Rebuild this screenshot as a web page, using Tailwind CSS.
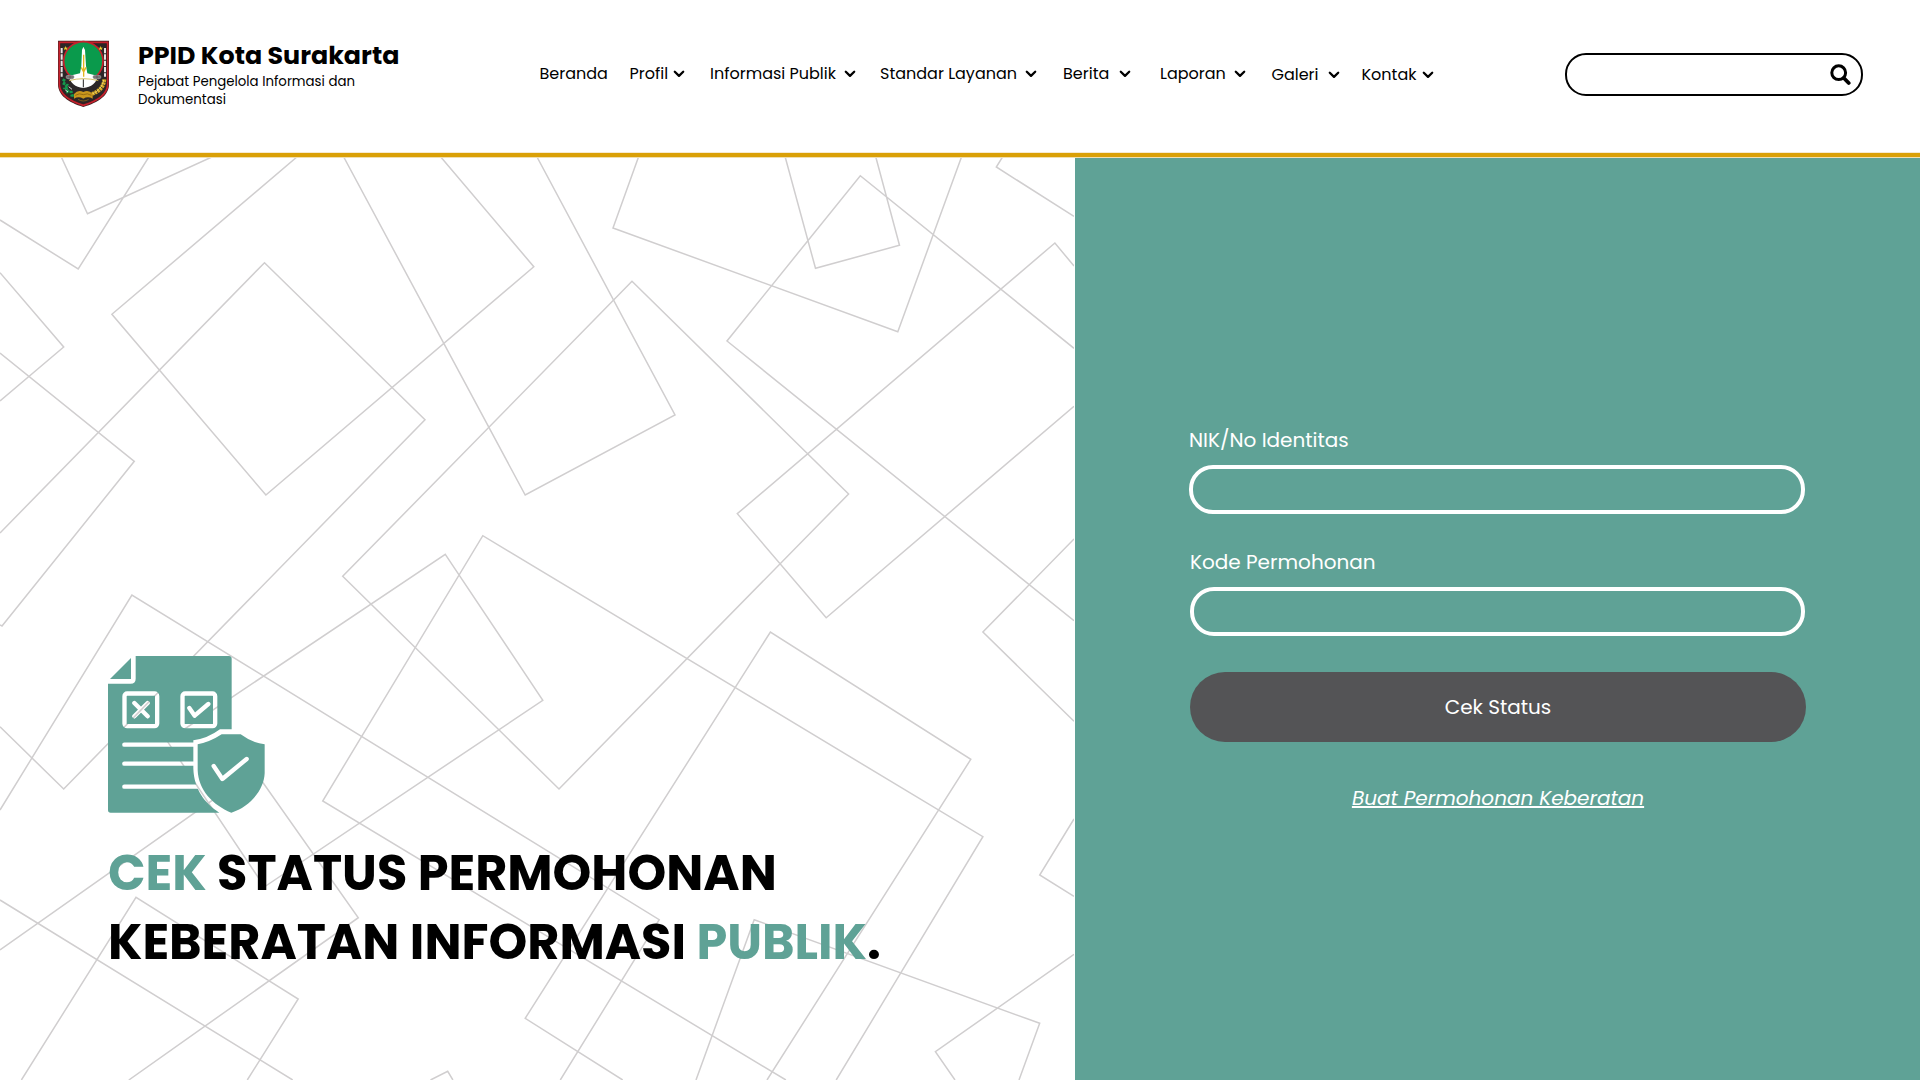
<!DOCTYPE html>
<html lang="id">
<head>
<meta charset="utf-8">
<title>PPID Kota Surakarta</title>
<script src="https://cdn.jsdelivr.net/npm/@tailwindcss/browser@4"></script>
</head>
<body class="w-[1920px] h-[1080px] overflow-hidden bg-white text-black font-[Poppins,Inter,sans-serif]">
<svg class="hidden">
  <symbol id="chev" viewBox="0 0 12 8"><path d="M1.8 1.8 6 5.9l4.2-4.1" fill="none" stroke="#000" stroke-width="2.3" stroke-linecap="round" stroke-linejoin="round"/></symbol>
</svg>
<header class="relative z-10 flex items-start h-[157px] border-b-4 border-[#daa007] shadow-[0_1px_0_#f0dfb0,inset_0_-1px_0_#f6ead0] whitespace-nowrap">
  <svg class="w-[66px] h-[80px] ml-[50px] mt-[34px] shrink-0" viewBox="0 0 198 240">
    <path d="M24 20H177V150C177 185 145 205 100 219C55 205 24 185 24 150Z" fill="#3b2020"/>
    <path d="M28 25H173V150C173 181 143 201 100 214C58 201 28 181 28 150Z" fill="none" stroke="#c8202c" stroke-width="5"/>
    <path d="M32 29H169V149C169 177 141 196 100 208C60 196 32 177 32 149Z" fill="#2b2628"/>
    <path d="M35 42V128M165 42V128" stroke="#e9e4e4" stroke-width="6" stroke-dasharray="16 3"/>
    <circle cx="100" cy="82" r="59" fill="#0a9a4c" stroke="#c8202c" stroke-width="5"/>
    <path d="M47 36l2 5h5l-4 3 2 5-5-3-5 3 2-5-4-3h5zM152 36l2 5h5l-4 3 2 5-5-3-5 3 2-5-4-3h5z" fill="#f3d22b"/>
    <path d="M96 48l4-10 5 10 3 48 4 22 32 8c-4 20-20 34-44 36c-24-2-40-16-44-36l34-8 4-22z" fill="#fff"/>
    <path d="M101 62v58M94 100l7 14 7-14M101 118v10" fill="none" stroke="#e2b61f" stroke-width="4"/>
    <path d="M57 140Q100 128 145 140" fill="none" stroke="#cdb44c" stroke-width="2.500"/>
    <path d="M100 136v24" stroke="#222" stroke-width="3"/>
    <ellipse cx="60" cy="129" rx="13" ry="7" fill="#8e8b8c"/><ellipse cx="141" cy="129" rx="13" ry="7" fill="#8e8b8c"/>
    <path d="M50 129h20M131 129h20M60 124v10M141 124v10" stroke="#504c4d" stroke-width="2"/>
    <path d="M38 136l8 5-4 8 9 4-6 9 10 2-2 10 11 0 1 10 11 2" fill="none" stroke="#149a4c" stroke-width="8" stroke-dasharray="9 4"/>
    <path d="M56 158l10 8M46 168l8 6" stroke="#fff" stroke-width="2.500"/>
    <path d="M163 136c-2 22-14 36-38 44" fill="none" stroke="#d9ac27" stroke-width="12" stroke-dasharray="7 2"/>
    <path d="M161 138c-4 20-14 32-34 42" fill="none" stroke="#f2d462" stroke-width="3"/>
    <path d="M72 180q12-14 28-6 16-8 28 6v14q-14-8-28 0-14-8-28 0z" fill="#c9961d"/>
    <path d="M76 184q12-8 24-2 12-6 24 2M84 196q16 10 32 0" fill="none" stroke="#8d6311" stroke-width="2.500"/>
  </svg>
  <div class="ml-[22px] mt-[40px] w-[300px]">
    <h1 class="text-[25.33px] leading-[31px] font-bold">PPID Kota Surakarta</h1>
    <p class="mt-0.5 text-[13.33px] leading-[18.3px]">Pejabat Pengelola Informasi dan<br>Dokumentasi</p>
  </div>
  <nav class="flex items-start ml-[101.5px] mt-[62px] text-base leading-[24px] w-[949.5px]">
    <a class="w-[90px]">Beranda</a>
    <a class="flex w-[80.5px]"><span class="w-[43.5px]">Profil</span><svg class="w-3 h-2 mt-2"><use href="#chev"/></svg></a>
    <a class="flex w-[170px]"><span class="w-[134px]">Informasi Publik</span><svg class="w-3 h-2 mt-2"><use href="#chev"/></svg></a>
    <a class="flex w-[183px]"><span class="w-[144.5px]">Standar Layanan</span><svg class="w-3 h-2 mt-2"><use href="#chev"/></svg></a>
    <a class="flex w-[97px]"><span class="w-[55.5px]">Berita</span><svg class="w-3 h-2 mt-2"><use href="#chev"/></svg></a>
    <a class="flex w-[111.5px]"><span class="w-[73.5px]">Laporan</span><svg class="w-3 h-2 mt-2"><use href="#chev"/></svg></a>
    <a class="flex w-[90px] pt-px"><span class="w-[56px]">Galeri</span><svg class="w-3 h-2 mt-2"><use href="#chev"/></svg></a>
    <a class="flex pt-px"><span class="w-[60px]">Kontak</span><svg class="w-3 h-2 mt-2"><use href="#chev"/></svg></a>
  </nav>
  <div class="flex justify-end w-[298px] h-[43px] ml-[76px] mt-[53px] rounded-[21px] border-2 border-black pr-[10px] pt-[9px]">
    <svg class="w-[21px] h-[22px]" viewBox="0 0 21 22"><circle cx="8.700" cy="8.700" r="6.900" fill="none" stroke="#000" stroke-width="3"/><path d="M13.800 14l4.900 5" stroke="#000" stroke-width="3.800" stroke-linecap="round"/></svg>
  </div>
</header>
<main class="flex h-[923px]">
  <section class="relative w-[1075px] h-[923px]">
    <svg class="absolute left-0 top-0 w-[1074px] h-[923px]" viewBox="0 157 1074 923" fill="none" stroke="#d0cecf" stroke-width="1.500">
      <path d="M61.300 157 87.500 213.700 211.800 157M0 220 78.200 269 148.800 157M0 272.700 63.700 347 0 401M0 353 134.300 461.300 2 626 0 625M296.900 157 111.900 314.300 265.900 495 533.800 266.700 440.800 157M0 533 264.500 262.700 425 419.700 63.700 789 0 726.700M343.700 157 525.200 495 675 415 537 157"/>
      <path d="M632 281.300 342.700 576.300 559 789 848.600 494ZM638.500 157 613 228 897.800 331.700 961.500 157M785.200 157 815.500 268.300 899.500 245.300 875.800 157M1074 620.700 727 341 860.300 175.700 1074 348.300M1002.500 157 996.300 167 1074 216.300M1074 266 1054.900 243 737.300 513.700 826.200 617.700 1074 406.300M1074 539 982.900 632 1074 721.300"/>
      <path d="M445.300 554.300 542.800 700.300 264.500 886.800 167 740.800ZM0 810 131.900 595 659.200 919.700 560.300 1080M0 900 292.700 1080M0 950 254.500 770.600 358.300 917.700 128.800 1080M21.400 1080 136 897.300 298.200 999 247.300 1080M430.500 1080 447.700 1071.300 452.900 1080M785.900 1080 322.700 801 482.800 535.700 982.900 836.700 836.200 1080"/>
      <path d="M622.700 1080 525.200 1018.300 770.400 632 970.800 759.300 767 1080M696 1080 754.200 919.700 1039.700 1023.300 1019 1080M1074 954.300 935.400 1051.700 955 1080M1074 819 1039.700 875 1074 896.300"/>
    </svg>
    <div class="relative pl-[108px] pt-[499px]">
      <svg class="w-[157px] h-[157px]" viewBox="54 48 471 471">
        <mask id="cut">
          <rect x="54" y="48" width="471" height="471" fill="#fff"/>
          <g fill="none" stroke="#000" stroke-width="13" stroke-linecap="round" stroke-linejoin="round">
            <rect x="103.500" y="160.500" width="98" height="98" rx="8"/>
            <rect x="277.500" y="160.500" width="98" height="98" rx="8"/>
            <path d="M133 189l40 40M173 189l-40 40M298 204l16 23 41-35M103 314H330M103 371H330M103 440H340"/>
          </g>
        </mask>
        <path mask="url(#cut)" fill="#5fa296" d="M137 48H417Q425 48 425 56V268H390Q352 296 310 301V385C312 450 345 490 388 518H62Q54 518 54 510V131H122Q137 131 137 116Z"/>
        <path fill="#5fa296" d="M123 54V117H60ZM395 283H452Q485 308 524 313V400C522 450 480 500 424 518C368 495 325 450 323 390V313Q360 306 395 283Z"/>
        <path fill="none" stroke="#fff" stroke-width="13" stroke-linecap="round" stroke-linejoin="round" d="M371 378l26 39 73-60"/>
      </svg>
      <h2 class="mt-[25px] text-[49.33px] leading-[69px] font-bold whitespace-nowrap">
        <span class="text-[#5fa296]">CEK</span> STATUS PERMOHONAN<br>
        KEBERATAN INFORMASI <span class="text-[#5fa296]">PUBLIK</span>.
      </h2>
    </div>
  </section>
  <section class="w-[845px] mt-px bg-[#5fa296] text-white text-[20px] pl-[114px] pt-[267px]">
    <label class="block h-[40px] leading-[30px]">NIK/No Identitas</label>
    <div class="w-[616px] h-[49px] rounded-[24px] border-4 border-white"></div>
    <label class="block h-[40px] leading-[30px] mt-[33px] pl-px">Kode Permohonan</label>
    <div class="w-[615px] h-[49px] ml-px rounded-[24px] border-4 border-white"></div>
    <div class="flex items-center justify-center w-[616px] h-[70px] mt-[36px] ml-px rounded-[35px] bg-[#545456]">Cek Status</div>
    <a class="block text-center w-[616px] mt-[41px] italic underline ml-px leading-[30px]">Buat Permohonan Keberatan</a>
  </section>
</main>
</body>
</html>
